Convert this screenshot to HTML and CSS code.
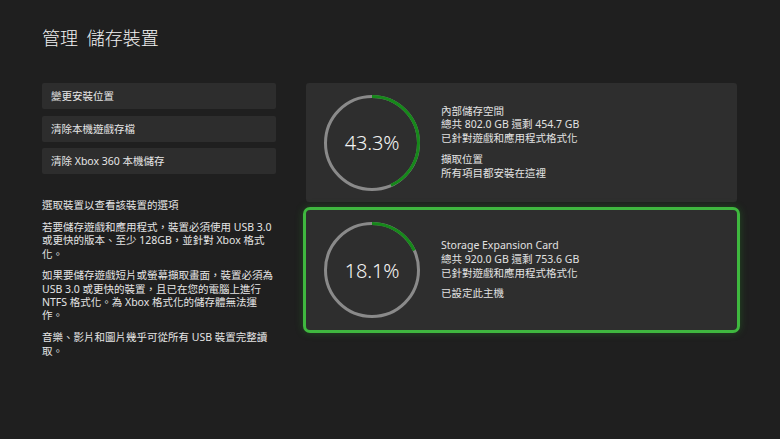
FILE: index.html
```html
<!DOCTYPE html>
<html lang="zh-Hant">
<head>
<meta charset="utf-8">
<title>管理 儲存裝置</title>
<link rel="stylesheet" href="styles.css">
</head>
<body>
<div class="page">
  <h1 class="title">管理 儲存裝置</h1>
  <div class="main">
    <div class="side">
      <div class="actions">
        <div class="action">變更安裝位置</div>
        <div class="action">清除本機遊戲存檔</div>
        <div class="action">清除 Xbox 360 本機儲存</div>
      </div>
      <div class="notes">
        <p>選取裝置以查看該裝置的選項</p>
        <p>若要儲存遊戲和應用程式，裝置必須使用 USB 3.0 或更快的版本、至少 128GB，並針對 Xbox 格式化。</p>
        <p>如果要儲存遊戲短片或螢幕擷取畫面，裝置必須為 USB 3.0 或更快的裝置，且已在您的電腦上進行 NTFS 格式化。為 Xbox 格式化的儲存體無法運作。</p>
        <p>音樂、影片和圖片幾乎可從所有 USB 裝置完整讀取。</p>
      </div>
    </div>
    <div class="devices">
      <div class="device">
        <div class="ring">
          <svg class="ring-svg" viewBox="0 0 96 96" width="96" height="96">
            <circle class="ring-track" cx="48" cy="48" r="46.5"/>
            <circle class="ring-fill" cx="48" cy="48" r="46.5" pathLength="100" stroke-dasharray="43.3 100" transform="rotate(-90 48 48)"/>
          </svg>
          <span class="ring-label">43.3%</span>
        </div>
        <div class="info">
          <div class="group">
            <div>內部儲存空間</div>
            <div>總共 802.0 GB 還剩 454.7 GB</div>
            <div>已針對遊戲和應用程式格式化</div>
          </div>
          <div class="group">
            <div>擷取位置</div>
            <div>所有項目都安裝在這裡</div>
          </div>
        </div>
      </div>
      <div class="device device-focused">
        <div class="ring">
          <svg class="ring-svg" viewBox="0 0 96 96" width="96" height="96">
            <circle class="ring-track" cx="48" cy="48" r="46.5"/>
            <circle class="ring-fill" cx="48" cy="48" r="46.5" pathLength="100" stroke-dasharray="18.1 100" transform="rotate(-90 48 48)"/>
          </svg>
          <span class="ring-label">18.1%</span>
        </div>
        <div class="info">
          <div class="group">
            <div>Storage Expansion Card</div>
            <div>總共 920.0 GB 還剩 753.6 GB</div>
            <div>已針對遊戲和應用程式格式化</div>
          </div>
          <div class="group">
            <div>已設定此主機</div>
          </div>
        </div>
      </div>
    </div>
  </div>
</div>
</body>
</html>
```

FILE: styles.css
```css
html, body {
  margin: 0;
  padding: 0;
}

body {
  width: 780px;
  height: 439px;
  overflow: hidden;
  background: #1f1f1f;
  color: #e4e4e4;
  font-family: "Noto Sans", "Noto Sans CJK TC", sans-serif;
  font-size: 10.5px;
}

.page {
  padding: 27px 43px 0 42px;
}

.title {
  margin: 0;
  font-size: 18px;
  line-height: 22px;
  font-weight: 300;
  word-spacing: 4px;
  color: #f2f2f2;
}

.main {
  display: flex;
  gap: 30px;
  margin-top: 34px;
}

.side {
  width: 234px;
  flex: none;
}

.actions {
  display: flex;
  flex-direction: column;
  gap: 6.5px;
}

.action {
  height: 26px;
  line-height: 26px;
  padding-left: 9px;
  background: #2d2d2d;
  border-radius: 2px;
  color: #e6e6e6;
}

.notes {
  margin-top: 25px;
}

.notes p {
  margin: 0 0 8.3px;
  line-height: 13.4px;
}

.devices {
  flex: 1;
  display: flex;
  flex-direction: column;
  gap: 8px;
}

.device {
  display: flex;
  align-items: center;
  gap: 21px;
  height: 119px;
  padding-left: 18px;
  background: #2e2e2e;
  border-radius: 3px;
}

.device-focused {
  height: 120px;
  outline: 3px solid #3fb83f;
  outline-offset: 0;
  border-radius: 4px;
  box-shadow: 0 0 8px 2px rgba(40, 170, 40, 0.4);
}

.ring {
  display: grid;
  place-items: center;
  width: 96px;
  height: 96px;
  flex: none;
}

.ring > * {
  grid-area: 1 / 1;
}

.ring-svg {
  display: block;
}

.ring-track {
  fill: none;
  stroke: #8a8a8a;
  stroke-width: 3;
}

.ring-fill {
  fill: none;
  stroke: #16881a;
  stroke-width: 3;
}

.ring-label {
  font-size: 20px;
  font-weight: 300;
  color: #f4f4f4;
  letter-spacing: -0.2px;
}

.info {
  line-height: 13.8px;
  color: #e2e2e2;
}

.group + .group {
  margin-top: 6.8px;
}
```
